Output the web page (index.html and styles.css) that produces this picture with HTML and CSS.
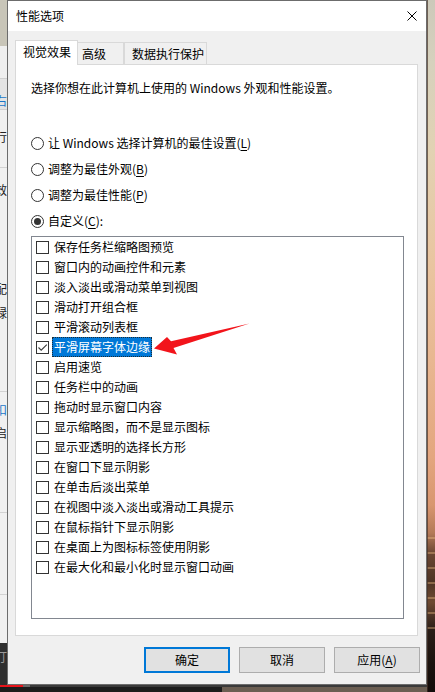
FILE: index.html
```html
<!DOCTYPE html>
<html lang="zh-CN">
<head>
<meta charset="utf-8">
<title>性能选项</title>
<link rel="stylesheet" href="styles.css">
</head>
<body>
<div class="screen">
  <div class="bgwin">
    <div class="seg s1"></div>
    <div class="seg s2"></div>
    <div class="seg s3"><span class="frag blue m17">右</span></div>
    <div class="seg s4"><span class="frag m21">行</span></div>
    <div class="seg s5"><span class="frag m16">效</span><span class="frag m87">配</span><span class="frag m12">绿</span></div>
    <div class="seg s6"><span class="frag blue m12">扣</span><span class="frag m11">启</span></div>
    <div class="seg s7"></div>
    <div class="seg s8"></div>
    <div class="seg s9"><span class="frag light m8">汀</span></div>
  </div>

  <div class="dialog">
    <div class="titlebar">
      <span class="title">性能选项</span>
      <svg class="close" width="10" height="10" viewBox="0 0 10 10"><path d="M0.5 0.5L9.5 9.5M9.5 0.5L0.5 9.5" stroke="#000" stroke-width="1" fill="none"/></svg>
    </div>
    <div class="body">
      <div class="tabs">
        <div class="tab active">视觉效果</div>
        <div class="tab t2">高级</div>
        <div class="tab t3">数据执行保护</div>
      </div>
      <div class="panel">
        <p class="desc">选择你想在此计算机上使用的 Windows 外观和性能设置。</p>
        <div class="radios">
          <div class="radio-row"><span class="radio"></span><span class="rtext">让 Windows 选择计算机的最佳设置(<u>L</u>)</span></div>
          <div class="radio-row"><span class="radio"></span><span class="rtext">调整为最佳外观(<u>B</u>)</span></div>
          <div class="radio-row"><span class="radio"></span><span class="rtext">调整为最佳性能(<u>P</u>)</span></div>
          <div class="radio-row"><span class="radio checked"><span class="dot"></span></span><span class="rtext">自定义(<u>C</u>):</span></div>
        </div>
        <div class="list">
          <div class="item"><span class="cb"></span><span class="label">保存任务栏缩略图预览</span></div>
          <div class="item"><span class="cb"></span><span class="label">窗口内的动画控件和元素</span></div>
          <div class="item"><span class="cb"></span><span class="label">淡入淡出或滑动菜单到视图</span></div>
          <div class="item"><span class="cb"></span><span class="label">滑动打开组合框</span></div>
          <div class="item"><span class="cb"></span><span class="label">平滑滚动列表框</span></div>
          <div class="item"><span class="cb"><svg width="11" height="11" viewBox="0 0 11 11"><path d="M1.5 5.5L4.2 8.2L9.8 2.6" stroke="#3c3c3c" stroke-width="1.1" fill="none"/></svg></span><span class="label selected">平滑屏幕字体边缘</span></div>
          <div class="item"><span class="cb"></span><span class="label">启用速览</span></div>
          <div class="item"><span class="cb"></span><span class="label">任务栏中的动画</span></div>
          <div class="item"><span class="cb"></span><span class="label">拖动时显示窗口内容</span></div>
          <div class="item"><span class="cb"></span><span class="label">显示缩略图，而不是显示图标</span></div>
          <div class="item"><span class="cb"></span><span class="label">显示亚透明的选择长方形</span></div>
          <div class="item"><span class="cb"></span><span class="label">在窗口下显示阴影</span></div>
          <div class="item"><span class="cb"></span><span class="label">在单击后淡出菜单</span></div>
          <div class="item"><span class="cb"></span><span class="label">在视图中淡入淡出或滑动工具提示</span></div>
          <div class="item"><span class="cb"></span><span class="label">在鼠标指针下显示阴影</span></div>
          <div class="item"><span class="cb"></span><span class="label">在桌面上为图标标签使用阴影</span></div>
          <div class="item"><span class="cb"></span><span class="label">在最大化和最小化时显示窗口动画</span></div>
        </div>
      </div>
      <div class="buttons">
        <button class="btn default">确定</button>
        <button class="btn">取消</button>
        <button class="btn">应用(<u>A</u>)</button>
      </div>
    </div>
  </div>

  <div class="desktop"></div>

  <div class="taskbar">
    <div class="tb-top"><span class="red"></span><span class="gray"></span><span class="dark"></span></div>
    <div class="tb-bot"><span class="black"></span><span class="brown"></span></div>
  </div>

  <svg class="arrow" width="435" height="692" viewBox="0 0 435 692">
    <polygon points="154,348.5 167,337 171,341.3 249.5,323.5 173.5,348 177,354.5" fill="#f2141b"/>
  </svg>
</div>
</body>
</html>
```

FILE: styles.css
```css
* { box-sizing: border-box; }
html, body { margin: 0; padding: 0; }
body {
  width: 435px;
  height: 692px;
  overflow: hidden;
  font-family: "Noto Sans CJK SC", "Microsoft YaHei", sans-serif;
  font-size: 12px;
  color: #000;
  background: #f0f0f0;
}
.screen {
  position: relative;
  display: grid;
  grid-template-columns: 7px 420px 8px;
  grid-template-rows: 685px 7px;
  width: 435px;
  height: 692px;
}

/* background window on the left */
.bgwin {
  grid-column: 1;
  grid-row: 1;
  overflow: hidden;
  display: flex;
  flex-direction: column;
  background: #f0f0f0;
}
.seg { flex: none; overflow: hidden; white-space: nowrap; }
.s1 { height: 46px; background: #c8c5b8; }
.s2 { height: 32px; background: #efefef; }
.s3 { height: 32px; background: #e4e4e4; border-top: 1px solid #d0d0d0; border-bottom: 1px solid #d0d0d0; }
.s4 { height: 58px; background: #f0f0f0; border-bottom: 1px solid #d2d2d2; }
.s5 { height: 224px; background: #f0f0f0; border-bottom: 1px solid #d2d2d2; }
.s6 { height: 121px; background: #f0f0f0; border-bottom: 1px solid #d2d2d2; }
.s7 { height: 82px; background: #f0f0f0; border-bottom: 1px solid #d2d2d2; }
.s8 { height: 48px; background: #f0f0f0; }
.s9 { flex: 1; background: #2f2f2f; }
.frag {
  display: block;
  margin-left: -5px;
  line-height: 12px;
  font-size: 12px;
  color: #222;
}
.frag.blue { color: #1976c8; }
.frag.light { color: #9a9a9a; }
.m8 { margin-top: 8px; }
.m11 { margin-top: 11px; }
.m12 { margin-top: 12px; }
.m16 { margin-top: 16px; }
.m17 { margin-top: 16px; }
.m21 { margin-top: 21px; }
.m87 { margin-top: 87px; }

/* dialog */
.dialog {
  grid-column: 2;
  grid-row: 1;
  border: 1px solid #6c6c6c;
  display: flex;
  flex-direction: column;
  background: #f0f0f0;
}
.titlebar {
  flex: none;
  height: 30px;
  background: #fff;
  display: flex;
  align-items: center;
  justify-content: space-between;
  padding: 0 9px 0 8px;
}
.title { font-size: 12px; line-height: 16px; }
.close { display: block; }

.body {
  flex: 1;
  display: flex;
  flex-direction: column;
  padding: 9px 6px 11px 7px;
}
.tabs {
  display: flex;
  align-items: flex-end;
  height: 25px;
  flex: none;
}
.tab {
  border: 1px solid #d9d9d9;
  border-bottom: none;
  background: #f0f0f0;
  height: 23px;
  line-height: 20px;
  padding-top: 1px;
  white-space: nowrap;
}
.tab.active {
  position: relative;
  z-index: 1;
  height: 25px;
  width: 63px;
  background: #fff;
  padding: 0 0 0 7px;
  line-height: 22px;
}
.tab.t2 { width: 47px; padding-left: 5px; margin-left: -1px; border-left: none; }
.tab.t3 { width: 83px; padding-left: 7px; }

.panel {
  flex: none;
  margin-top: -1px;
  width: 403px;
  height: 572px;
  border: 1px solid #d9d9d9;
  background: #fff;
  padding: 15px 13px 16px 15px;
}
.desc {
  margin: 0;
  line-height: 16px;
  height: 16px;
  white-space: nowrap;
}
.radios {
  margin-top: 34px;
  display: flex;
  flex-direction: column;
}
.radio-row {
  height: 26px;
  display: flex;
  align-items: center;
}
.radio {
  width: 13px;
  height: 13px;
  border: 1px solid #333;
  border-radius: 50%;
  background: #fff;
  display: flex;
  align-items: center;
  justify-content: center;
  flex: none;
}
.dot { width: 7px; height: 7px; border-radius: 50%; background: #333; }
.rtext { margin-left: 4px; line-height: 16px; white-space: nowrap; }
u { text-decoration: underline; text-underline-offset: 2px; }

.list {
  margin-top: 2px;
  width: 373px;
  height: 383px;
  border: 1px solid #828790;
  background: #fff;
  display: flex;
  flex-direction: column;
}
.item {
  height: 20px;
  flex: none;
  display: flex;
  align-items: center;
  padding-left: 4px;
}
.cb {
  width: 13px;
  height: 13px;
  border: 1px solid #333;
  background: #fff;
  flex: none;
  display: flex;
  align-items: center;
  justify-content: center;
}
.cb svg { display: block; }
.label {
  margin-left: 3px;
  padding: 0 2px;
  height: 20px;
  line-height: 20px;
  white-space: nowrap;
}
.label.selected {
  background: #0078d7;
  color: #fff;
  outline: 1px dotted rgba(40, 20, 0, 0.75);
  outline-offset: -1px;
}

.buttons {
  margin-top: 11px;
  display: flex;
  justify-content: flex-end;
  gap: 9px;
  flex: none;
}
.btn {
  width: 86px;
  height: 26px;
  background: #e1e1e1;
  border: 1px solid #adadad;
  font-family: "Noto Sans CJK SC", "Microsoft YaHei", sans-serif;
  font-size: 12px;
  color: #000;
  padding: 0;
  line-height: 16px;
}
.btn.default { border: 2px solid #0078d7; }

/* desktop on the right */
.desktop {
  grid-column: 3;
  grid-row: 1 / 3;
  box-shadow: inset 1px 0 0 rgba(70, 50, 40, 0.7);
  background:
    repeating-linear-gradient(180deg, rgba(0,0,0,0) 0 7px, rgba(250,200,140,0.35) 7px 9px, rgba(0,0,0,0) 9px 15px) 0 530px / 100% 100px no-repeat,
    linear-gradient(180deg,
      #cdc9ba 0%, #d6d1bd 9%, #e2d2b3 22%, #e9c5a0 38%, #e8b791 52%,
      #e3a67f 66%, #d8966f 73%, #b47a58 77%, #6a4632 80%, #4e3424 84%,
      #6e4a32 87%, #2a1e18 91%, #1a120e 96%, #120c0a 100%);
}

/* taskbar strip at the bottom */
.taskbar {
  grid-column: 1 / 3;
  grid-row: 2;
  display: flex;
  flex-direction: column;
}
.tb-top { height: 2px; display: flex; }
.tb-top .red { width: 23px; background: #e8141b; }
.tb-top .gray { width: 7px; background: #6a6a6a; }
.tb-top .dark { flex: 1; background: #3a3a3a; }
.tb-bot { flex: 1; display: flex; }
.tb-bot .black { width: 222px; background: #1c1c1c; }
.tb-bot .brown { flex: 1; background: #6b5e52; }

.arrow {
  position: absolute;
  left: 0;
  top: 0;
  pointer-events: none;
}
```
